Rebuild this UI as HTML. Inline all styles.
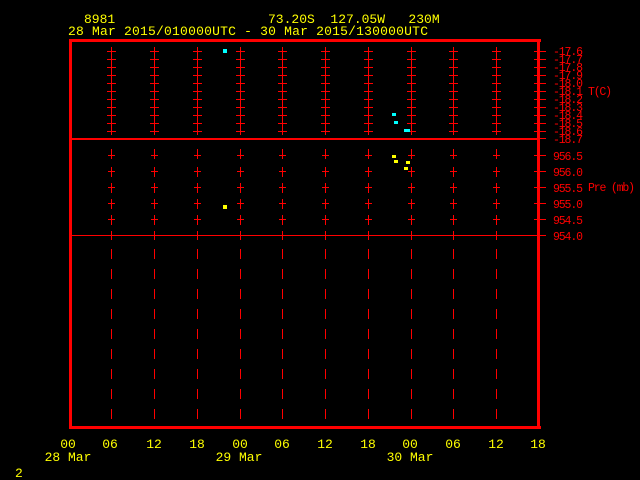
<!DOCTYPE html>
<html><head><style>
html,body{margin:0;padding:0;background:#000;width:640px;height:480px;overflow:hidden}
svg{display:block}
text{font-family:"Liberation Mono",monospace;}
</style></head><body>
<svg width="640" height="480" viewBox="0 0 640 480" xmlns="http://www.w3.org/2000/svg">
<defs>
<g id="col" fill="#f00">
<rect x="0" y="47" width="1" height="88"/>
<rect x="-4" y="51" width="9" height="1"/><rect x="-4" y="59" width="9" height="1"/><rect x="-4" y="67" width="9" height="1"/>
<rect x="-4" y="75" width="9" height="1"/><rect x="-4" y="83" width="9" height="1"/><rect x="-4" y="91" width="9" height="1"/>
<rect x="-4" y="99" width="9" height="1"/><rect x="-4" y="107" width="9" height="1"/><rect x="-4" y="115" width="9" height="1"/>
<rect x="-4" y="123" width="9" height="1"/><rect x="-4" y="131" width="9" height="1"/>
<rect x="0" y="149" width="1" height="10"/><rect x="0" y="167" width="1" height="10"/><rect x="0" y="183" width="1" height="10"/>
<rect x="0" y="199" width="1" height="10"/><rect x="0" y="215" width="1" height="10"/><rect x="0" y="231" width="1" height="9"/>
<rect x="-3" y="155" width="7" height="1"/><rect x="-3" y="171" width="7" height="1"/><rect x="-3" y="187" width="7" height="1"/>
<rect x="-3" y="203" width="7" height="1"/><rect x="-3" y="219" width="7" height="1"/>
<rect x="0" y="249" width="1" height="10"/><rect x="0" y="269" width="1" height="10"/><rect x="0" y="289" width="1" height="10"/>
<rect x="0" y="309" width="1" height="10"/><rect x="0" y="329" width="1" height="10"/><rect x="0" y="349" width="1" height="10"/>
<rect x="0" y="369" width="1" height="10"/><rect x="0" y="389" width="1" height="10"/><rect x="0" y="409" width="1" height="10"/>
</g>
</defs>
<use href="#col" x="111"/><use href="#col" x="154"/><use href="#col" x="197"/><use href="#col" x="240"/><use href="#col" x="282"/>
<use href="#col" x="325"/><use href="#col" x="368"/><use href="#col" x="411"/><use href="#col" x="453"/><use href="#col" x="496"/>
<g fill="#f00">
<rect x="72" y="138" width="465" height="2"/>
<rect x="72" y="235" width="465" height="1"/>
<rect x="534" y="51" width="12" height="1"/><rect x="534" y="59" width="12" height="1"/><rect x="534" y="67" width="12" height="1"/>
<rect x="534" y="75" width="12" height="1"/><rect x="534" y="83" width="12" height="1"/><rect x="534" y="91" width="12" height="1"/>
<rect x="534" y="99" width="12" height="1"/><rect x="534" y="107" width="12" height="1"/><rect x="534" y="115" width="12" height="1"/>
<rect x="534" y="123" width="12" height="1"/><rect x="534" y="131" width="12" height="1"/><rect x="534" y="138" width="12" height="1"/>
<rect x="534" y="155" width="12" height="1"/><rect x="534" y="171" width="12" height="1"/><rect x="534" y="187" width="12" height="1"/>
<rect x="534" y="203" width="12" height="1"/><rect x="534" y="219" width="12" height="1"/><rect x="534" y="235" width="12" height="1"/>
<rect x="69" y="39" width="472" height="3"/>
<rect x="69" y="426" width="472" height="3"/>
<rect x="69" y="39" width="3" height="390"/>
<rect x="537" y="39" width="3" height="390"/>
</g>
<g fill="#0ff">
<rect x="223" y="49" width="4" height="4"/>
<rect x="392" y="113" width="4" height="3"/>
<rect x="394" y="121" width="4" height="3"/>
<rect x="404" y="129" width="6" height="3"/>
</g>
<g fill="#ff0">
<rect x="223" y="205" width="4" height="4"/>
<rect x="392" y="155" width="4" height="3"/>
<rect x="394" y="160" width="4" height="3"/>
<rect x="406" y="161" width="4" height="3"/>
<rect x="404" y="167" width="4" height="3"/>
</g>
<g fill="#f00" font-size="11.5" lengthAdjust="spacingAndGlyphs">
<text x="553" y="55" textLength="30">-17.6</text>
<text x="553" y="63" textLength="30">-17.7</text>
<text x="553" y="71" textLength="30">-17.8</text>
<text x="553" y="79" textLength="30">-17.9</text>
<text x="553" y="87" textLength="30">-18.0</text>
<text x="553" y="95" textLength="30">-18.1</text>
<text x="553" y="103" textLength="30">-18.2</text>
<text x="553" y="111" textLength="30">-18.3</text>
<text x="553" y="119" textLength="30">-18.4</text>
<text x="553" y="127" textLength="30">-18.5</text>
<text x="553" y="135" textLength="30">-18.6</text>
<text x="553" y="143" textLength="30">-18.7</text>
<text x="588" y="95" textLength="24">T(C)</text>
<text x="553" y="160" textLength="30">956.5</text>
<text x="553" y="176" textLength="30">956.0</text>
<text x="553" y="192" textLength="30">955.5</text>
<text x="553" y="208" textLength="30">955.0</text>
<text x="553" y="224" textLength="30">954.5</text>
<text x="553" y="240" textLength="30">954.0</text>
<text x="588" y="191" textLength="47">Pre (mb)</text>
</g>
<g fill="#ff0" font-size="13">
<text x="84" y="23">8981</text>
<text x="268" y="23" xml:space="preserve">73.20S  127.05W   230M</text>
<text x="68" y="35" textLength="360">28 Mar 2015/010000UTC - 30 Mar 2015/130000UTC</text>
<g text-anchor="middle">
<text x="68" y="448">00</text><text x="110" y="448">06</text><text x="154" y="448">12</text>
<text x="197" y="448">18</text><text x="240" y="448">00</text><text x="282" y="448">06</text>
<text x="325" y="448">12</text><text x="368" y="448">18</text><text x="410" y="448">00</text>
<text x="453" y="448">06</text><text x="496" y="448">12</text><text x="538" y="448">18</text>
<text x="68" y="461">28 Mar</text><text x="239" y="461">29 Mar</text><text x="410" y="461">30 Mar</text>
</g>
<text x="15" y="477">2</text>
</g>
</svg>
</body></html>
